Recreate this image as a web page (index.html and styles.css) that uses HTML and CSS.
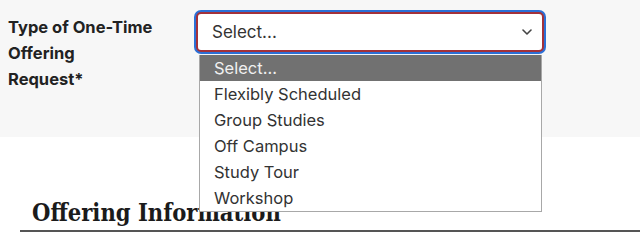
FILE: index.html
```html
<!DOCTYPE html>
<html lang="en">
<head>
    <meta charset="UTF-8">
    <meta name="viewport" content="width=device-width, initial-scale=1.0">
    <title>One-Time Offering Request</title>
    <link rel="stylesheet" href="styles.css">
</head>
<body>
    <div class="field-row">
        <label class="field-label" for="offeringType">Type of One-Time Offering<br>Request*</label>
        <div class="field-control">
            <div class="select" id="offeringType">
                <span class="select-value">Select...</span>
                <svg class="chevron" width="10" height="6" viewBox="0 0 10 6" fill="none" stroke="currentColor" stroke-width="1.6" stroke-linecap="round" stroke-linejoin="round">
                    <polyline points="1 1 5 5 9 1"></polyline>
                </svg>
            </div>
            <ul class="listbox">
                <li class="active">Select...</li>
                <li>Flexibly Scheduled</li>
                <li>Group Studies</li>
                <li>Off Campus</li>
                <li>Study Tour</li>
                <li>Workshop</li>
            </ul>
        </div>
    </div>

    <div class="section">
        <h2>Offering Information</h2>
    </div>
</body>
</html>
```

FILE: styles.css
```css
:root {
    --panel-bg: #f7f7f7;
    --text-color: #222;
    --crimson: #a3313a;
    --focus-blue: #2b6fd6;
}
body {
    margin: 0;
    font-family: Inter, 'Noto Sans', sans-serif;
    color: var(--text-color);
    background: #fff;
}
.field-row {
    display: flex;
    background: var(--panel-bg);
    padding: 13px 0 0 8px;
    height: 124px;
}
.field-label {
    width: 186px;
    margin-top: 1px;
    font-size: 16.5px;
    font-weight: 700;
    line-height: 26px;
    padding-right: 30px;
    box-sizing: border-box;
}
.field-control {
    position: relative;
}
.select {
    display: flex;
    align-items: center;
    justify-content: space-between;
    width: 348px;
    height: 40px;
    box-sizing: border-box;
    margin: -1px 0 0 2px;
    padding: 0 10px 0 14px;
    background: #fff;
    border: 2px solid var(--crimson);
    border-radius: 5px;
    box-shadow: 0 0 0 2px var(--focus-blue);
    font-size: 17px;
    color: #333;
}
.chevron {
    color: #444;
}
.listbox {
    position: absolute;
    top: 42px;
    left: 5px;
    width: 343px;
    box-sizing: border-box;
    margin: 0;
    padding: 0;
    list-style: none;
    background: #fff;
    border: 1px solid #a8a8a8;
    border-top: none;
    font-size: 16.5px;
    z-index: 2;
}
.listbox li {
    height: 26px;
    line-height: 26px;
    padding-left: 14px;
    color: #333;
}
.listbox li.active {
    background: #717171;
    color: #f0f0f0;
}
.section {
    margin: 61px 0 0 20px;
}
.section h2 {
    margin: 0;
    padding: 0 0 2px 12px;
    font-family: 'DejaVu Serif Condensed', 'DejaVu Serif', serif;
    font-stretch: condensed;
    font-size: 23.5px;
    font-weight: 700;
    line-height: 30px;
    color: #1b1b1b;
    border-bottom: 2px solid #555;
}
```
